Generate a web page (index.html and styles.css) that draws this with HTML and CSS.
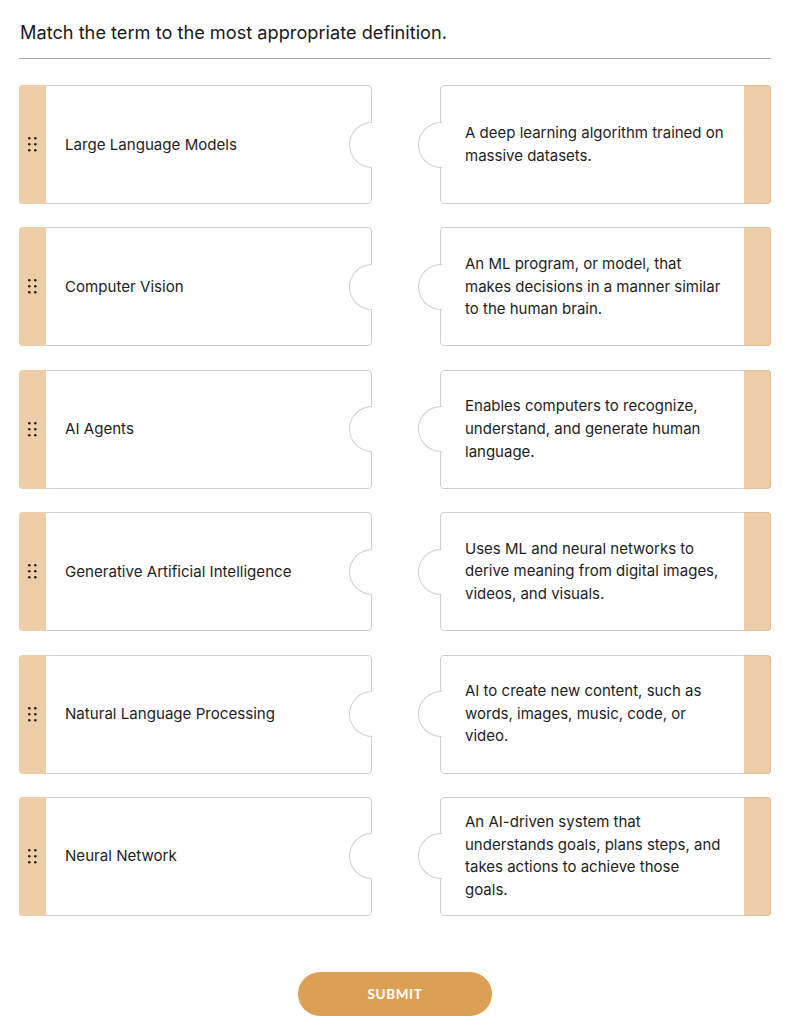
FILE: index.html
```html
<!DOCTYPE html>
<html lang="en">
<head>
<meta charset="utf-8">
<title>Match</title>
<link rel="stylesheet" href="styles.css">
</head>
<body>
<div class="page">
  <div class="header">Match the term to the most appropriate definition.</div>
  <div class="board">
    <div class="row">
      <div class="term"><div class="stripe"><svg class="grip" viewBox="0 0 9 15" width="9" height="15"><circle cx="1.3" cy="1.3" r="1.3"/><circle cx="7.3" cy="1.3" r="1.3"/><circle cx="1.3" cy="7.3" r="1.3"/><circle cx="7.3" cy="7.3" r="1.3"/><circle cx="1.3" cy="13.3" r="1.3"/><circle cx="7.3" cy="13.3" r="1.3"/></svg></div><div class="term-text">Large Language Models</div></div>
      <div class="def"><div class="def-text">A deep learning algorithm trained on massive datasets.</div><div class="stripe-r"></div></div>
    </div>
    <div class="row">
      <div class="term"><div class="stripe"><svg class="grip" viewBox="0 0 9 15" width="9" height="15"><circle cx="1.3" cy="1.3" r="1.3"/><circle cx="7.3" cy="1.3" r="1.3"/><circle cx="1.3" cy="7.3" r="1.3"/><circle cx="7.3" cy="7.3" r="1.3"/><circle cx="1.3" cy="13.3" r="1.3"/><circle cx="7.3" cy="13.3" r="1.3"/></svg></div><div class="term-text">Computer Vision</div></div>
      <div class="def"><div class="def-text">An ML program, or model, that makes decisions in a manner similar to the human brain.</div><div class="stripe-r"></div></div>
    </div>
    <div class="row">
      <div class="term"><div class="stripe"><svg class="grip" viewBox="0 0 9 15" width="9" height="15"><circle cx="1.3" cy="1.3" r="1.3"/><circle cx="7.3" cy="1.3" r="1.3"/><circle cx="1.3" cy="7.3" r="1.3"/><circle cx="7.3" cy="7.3" r="1.3"/><circle cx="1.3" cy="13.3" r="1.3"/><circle cx="7.3" cy="13.3" r="1.3"/></svg></div><div class="term-text">AI Agents</div></div>
      <div class="def"><div class="def-text">Enables computers to recognize, understand, and generate human language.</div><div class="stripe-r"></div></div>
    </div>
    <div class="row">
      <div class="term"><div class="stripe"><svg class="grip" viewBox="0 0 9 15" width="9" height="15"><circle cx="1.3" cy="1.3" r="1.3"/><circle cx="7.3" cy="1.3" r="1.3"/><circle cx="1.3" cy="7.3" r="1.3"/><circle cx="7.3" cy="7.3" r="1.3"/><circle cx="1.3" cy="13.3" r="1.3"/><circle cx="7.3" cy="13.3" r="1.3"/></svg></div><div class="term-text">Generative Artificial Intelligence</div></div>
      <div class="def"><div class="def-text">Uses ML and neural networks to derive meaning from digital images, videos, and visuals.</div><div class="stripe-r"></div></div>
    </div>
    <div class="row">
      <div class="term"><div class="stripe"><svg class="grip" viewBox="0 0 9 15" width="9" height="15"><circle cx="1.3" cy="1.3" r="1.3"/><circle cx="7.3" cy="1.3" r="1.3"/><circle cx="1.3" cy="7.3" r="1.3"/><circle cx="7.3" cy="7.3" r="1.3"/><circle cx="1.3" cy="13.3" r="1.3"/><circle cx="7.3" cy="13.3" r="1.3"/></svg></div><div class="term-text">Natural Language Processing</div></div>
      <div class="def"><div class="def-text">AI to create new content, such as words, images, music, code, or video.</div><div class="stripe-r"></div></div>
    </div>
    <div class="row">
      <div class="term"><div class="stripe"><svg class="grip" viewBox="0 0 9 15" width="9" height="15"><circle cx="1.3" cy="1.3" r="1.3"/><circle cx="7.3" cy="1.3" r="1.3"/><circle cx="1.3" cy="7.3" r="1.3"/><circle cx="7.3" cy="7.3" r="1.3"/><circle cx="1.3" cy="13.3" r="1.3"/><circle cx="7.3" cy="13.3" r="1.3"/></svg></div><div class="term-text">Neural Network</div></div>
      <div class="def"><div class="def-text">An AI-driven system that understands goals, plans steps, and takes actions to achieve those goals.</div><div class="stripe-r"></div></div>
    </div>
  </div>
  <div class="actions"><button class="submit" type="button">SUBMIT</button></div>
</div>
</body>
</html>
```
FILE: styles.css
```css
html, body {
  margin: 0;
  padding: 0;
  background: #ffffff;
}
body {
  font-family: Inter, "Noto Sans", "Liberation Sans", sans-serif;
  color: #1e1e1e;
}
.page {
  width: 752px;
  margin: 0 19px;
  padding-top: 20px;
}
.header {
  font-size: 18.2px;
  line-height: 24px;
  color: #1a1a1a;
  padding-left: 1px;
  padding-bottom: 14px;
  border-bottom: 1px solid #aaaaaa;
}
.board {
  margin-top: 26px;
  display: flex;
  flex-direction: column;
  gap: 23.4px;
}
.row {
  display: grid;
  grid-template-columns: 353px 353px;
  column-gap: 46px;
  height: 119px;
}
.term {
  position: relative;
  display: flex;
  align-items: center;
  border: 1px solid #cfcfcf;
  border-radius: 4px;
  background: #fff;
  box-sizing: border-box;
}
.term::after {
  content: "";
  position: absolute;
  right: -1px;
  top: 50%;
  width: 22px;
  height: 44px;
  margin-top: -23px;
  background: #fff;
  border: 1px solid #cfcfcf;
  border-right: none;
  border-radius: 23px 0 0 23px;
}
.stripe {
  align-self: stretch;
  width: 27px;
  flex: none;
  margin: -1px 0 -1px -1px;
  background: #eecea8;
  border-radius: 4px 0 0 4px;
  display: flex;
  align-items: center;
  justify-content: center;
}
.grip {
  fill: #1e1e1e;
  margin-left: 0;
}
.term-text {
  padding-left: 19px;
  font-size: 15.1px;
  line-height: 22px;
  color: #1e1e1e;
}
.def {
  position: relative;
  margin-left: 22px;
  display: flex;
  align-items: center;
  border: 1px solid #cfcfcf;
  border-radius: 4px;
  background: #fff;
  box-sizing: border-box;
}
.def::before {
  content: "";
  position: absolute;
  left: -23px;
  top: 50%;
  width: 23px;
  height: 44px;
  margin-top: -23px;
  background: #fff;
  border: 1px solid #cfcfcf;
  border-right: none;
  border-radius: 23px 0 0 23px;
}
.def-text {
  flex: 1;
  padding: 0 19.4px 0 24px;
  font-size: 15px;
  line-height: 22.6px;
  color: #1e1e1e;
}
.stripe-r {
  align-self: stretch;
  width: 26px;
  flex: none;
  margin: -1px -1px -1px 0;
  background: #eecea8;
  border: 1px solid #e3c195;
  border-left: none;
  border-radius: 0 4px 4px 0;
}
.actions {
  display: flex;
  justify-content: center;
  margin-top: 56px;
}
.submit {
  width: 194px;
  height: 44px;
  border: none;
  border-radius: 22px;
  background: #dca055;
  color: #ffffff;
  font-family: Lato, "Open Sans", sans-serif;
  font-weight: 700;
  font-size: 13.5px;
  letter-spacing: 0.6px;
  cursor: pointer;
}
```
